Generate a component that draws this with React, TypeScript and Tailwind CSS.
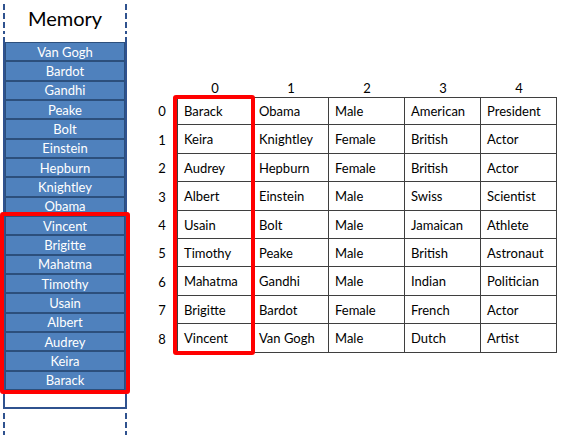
const memory = [
  'Van Gogh', 'Bardot', 'Gandhi', 'Peake', 'Bolt', 'Einstein', 'Hepburn', 'Knightley', 'Obama',
  'Vincent', 'Brigitte', 'Mahatma', 'Timothy', 'Usain', 'Albert', 'Audrey', 'Keira', 'Barack',
]

const rows = [
  ['Barack', 'Obama', 'Male', 'American', 'President'],
  ['Keira', 'Knightley', 'Female', 'British', 'Actor'],
  ['Audrey', 'Hepburn', 'Female', 'British', 'Actor'],
  ['Albert', 'Einstein', 'Male', 'Swiss', 'Scientist'],
  ['Usain', 'Bolt', 'Male', 'Jamaican', 'Athlete'],
  ['Timothy', 'Peake', 'Male', 'British', 'Astronaut'],
  ['Mahatma', 'Gandhi', 'Male', 'Indian', 'Politician'],
  ['Brigitte', 'Bardot', 'Female', 'French', 'Actor'],
  ['Vincent', 'Van Gogh', 'Male', 'Dutch', 'Artist'],
]

// Dashed vertical edge of the memory strip
function Dash({ className }: { className?: string }) {
  return (
    <div
      className={`w-[2px] bg-[repeating-linear-gradient(to_bottom,#2f528f_0px,#2f528f_6px,transparent_6px,transparent_9px)] ${className ?? ''}`}
    />
  )
}

export default function App() {
  return (
    <div className="relative flex w-[563px] h-[436px] overflow-hidden bg-white font-['Lato',sans-serif] text-black">
      {/* Memory strip */}
      <div className="relative w-[130px] shrink-0 pl-[3px]">
        <div className="flex w-[124px] flex-col">
          <div className="flex h-[37px] justify-between pt-[4px]">
            <Dash className="h-[30px]" />
            <span className="flex-1 text-center text-[20px] leading-[28px]">Memory</span>
            <Dash className="h-[30px]" />
          </div>
          <div className="flex h-[372px] flex-col border-x-2 border-b-2 border-[#2f528f] pt-[5px]">
            <div className="flex h-[348px] flex-col">
              {memory.map((name) => (
                <div
                  key={name}
                  className="flex flex-1 items-center justify-center border border-[#2c4f7c] bg-[#4f81bd] pt-[1px] text-[13px] leading-none text-white"
                >
                  {name}
                </div>
              ))}
            </div>
          </div>
          <div className="flex justify-between pt-[4px]">
            <Dash className="h-[22px]" />
            <Dash className="h-[22px]" />
          </div>
        </div>
        <div className="absolute left-0 top-[212px] h-[182px] w-[130px] rounded-[3px] border-4 border-[#ff0000]" />
      </div>

      {/* Table */}
      <div className="ml-[17px] pt-[80px]">
        <div className="flex h-[17px]">
          <div className="w-[30px]" />
          {[0, 1, 2, 3, 4].map((n) => (
            <div key={n} className="w-[76px] text-center text-[13px] leading-[17px]">
              {n}
            </div>
          ))}
        </div>
        {rows.map((row, r) => (
          <div key={r} className="flex h-[28.4px]">
            <div className="flex w-[30px] items-center justify-center pt-[2px] text-[13px]">{r}</div>
            {row.map((cell, c) => (
              <div
                key={c}
                className={`flex w-[76px] items-center border-r border-b border-[#3f3f3f] pl-[6px] pt-[2px] text-[13px] ${c === 0 ? 'border-l' : ''} ${r === 0 ? 'border-t' : ''}`}
              >
                {cell}
              </div>
            ))}
          </div>
        ))}
      </div>
      <div className="absolute left-[173px] top-[95px] h-[260px] w-[82px] rounded-[3px] border-4 border-[#ff0000]" />
    </div>
  )
}
